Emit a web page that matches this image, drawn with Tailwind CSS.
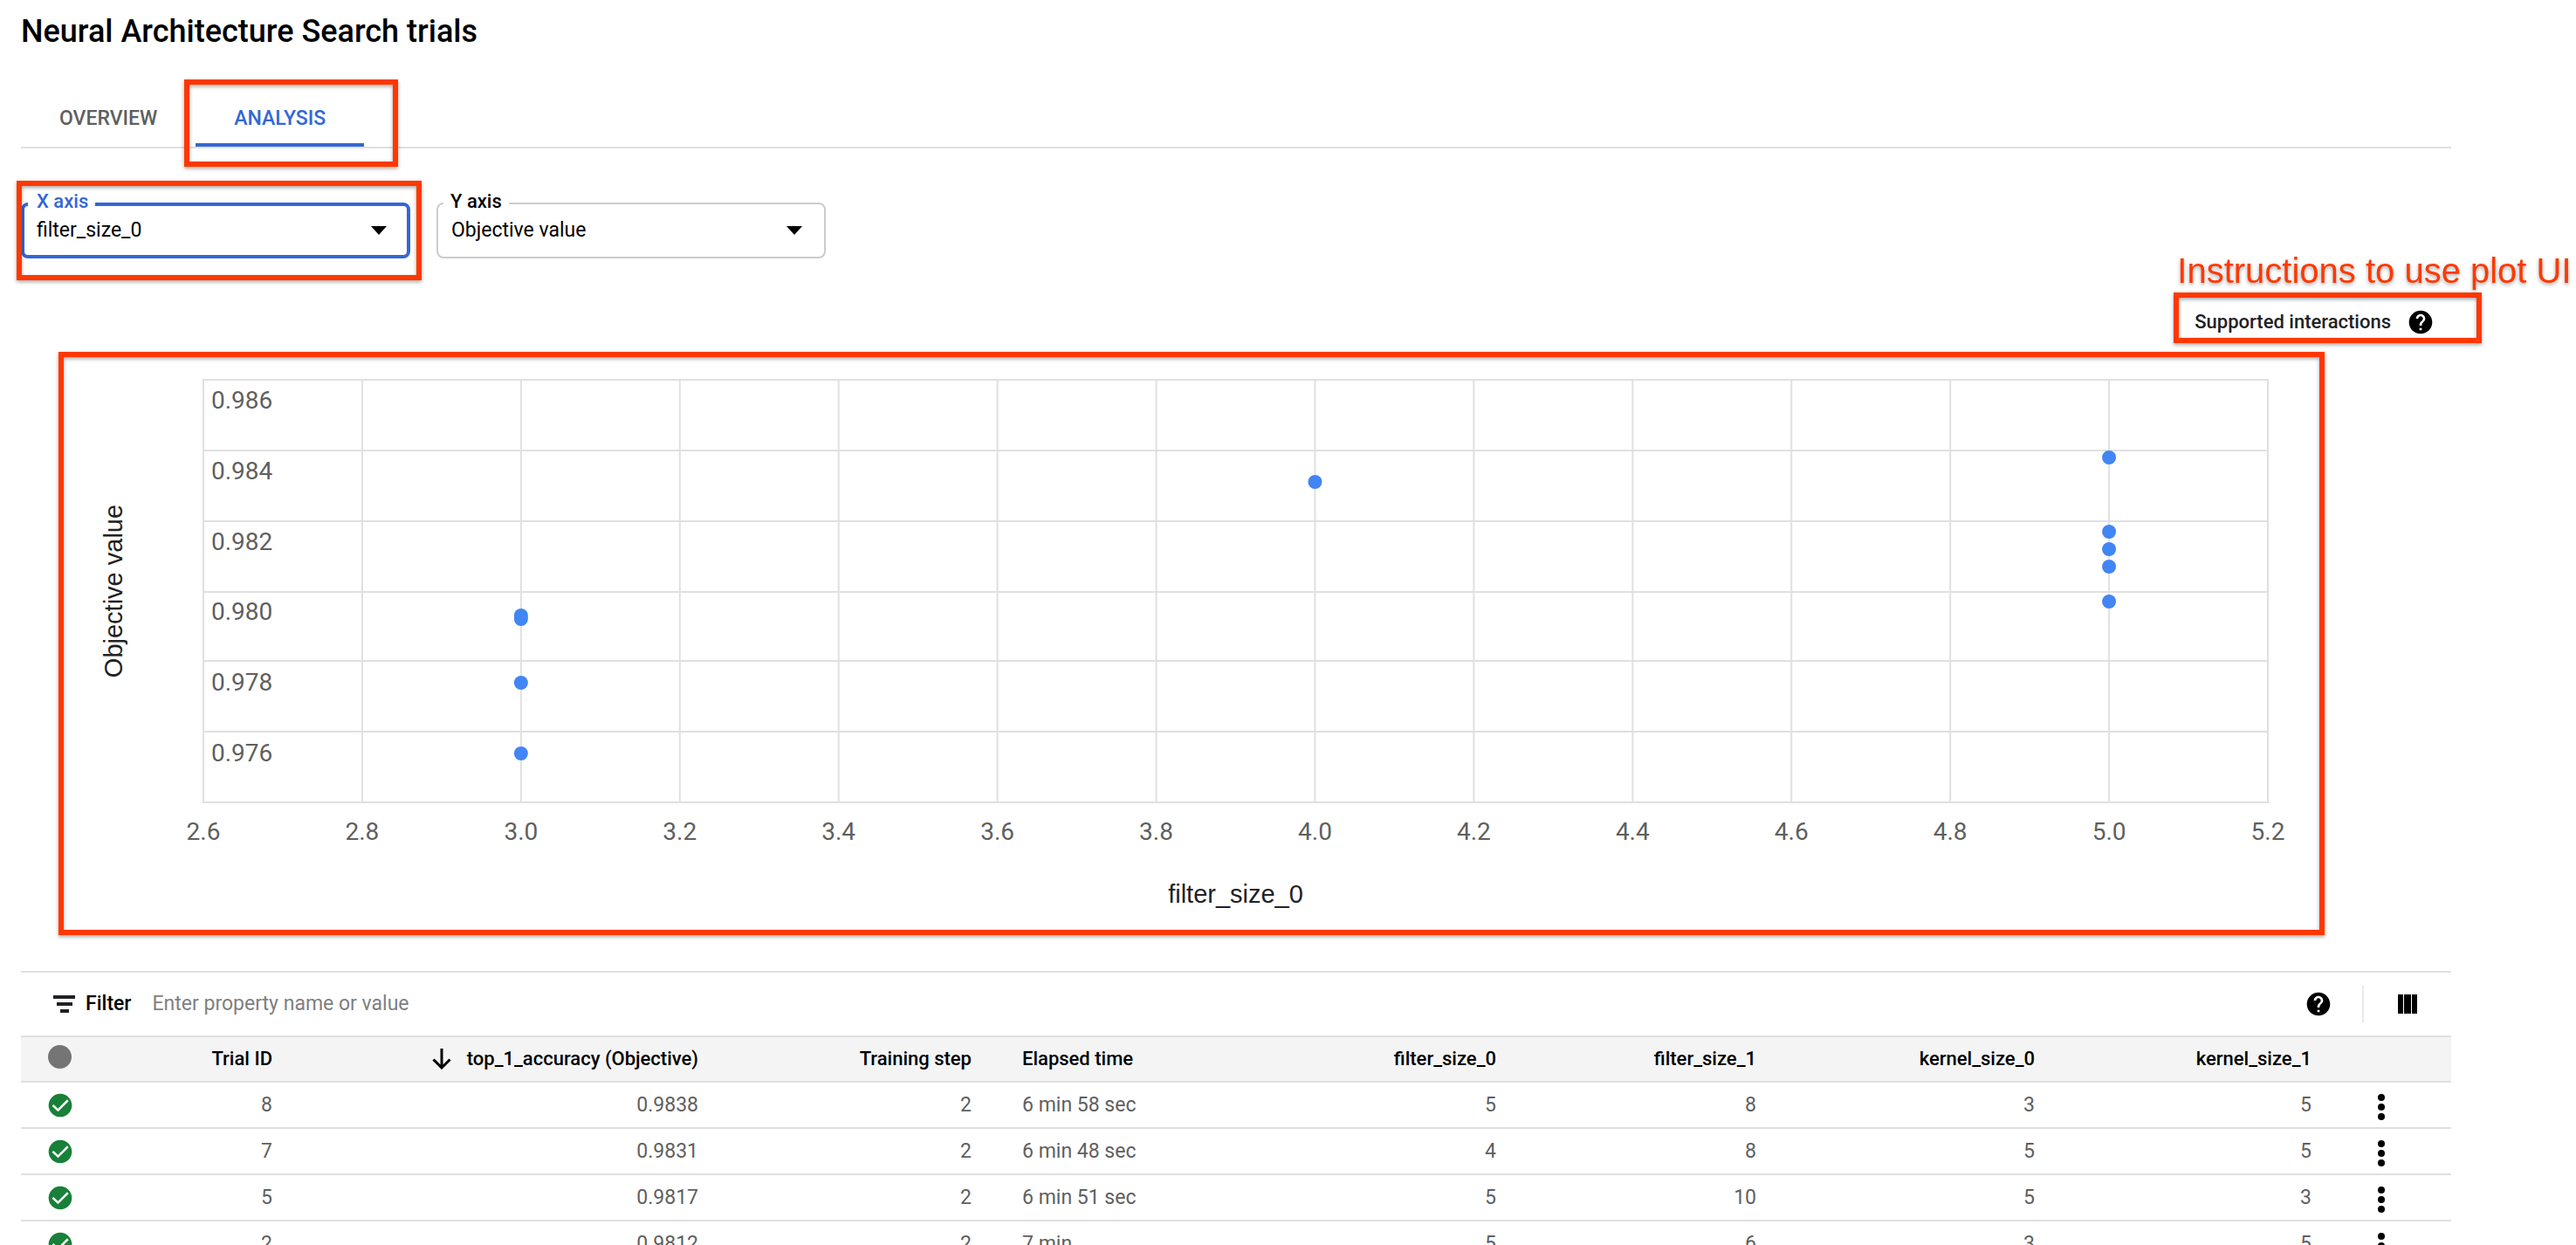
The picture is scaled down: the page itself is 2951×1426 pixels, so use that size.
<!DOCTYPE html>
<html lang="en">
<head>
<meta charset="utf-8">
<meta name="viewport" content="width=device-width, initial-scale=1">
<title>Neural Architecture Search trials</title>
<script src="https://cdn.jsdelivr.net/npm/@tailwindcss/browser@4"></script>
</head>
<body class="h-screen overflow-hidden bg-white font-[Roboto,sans-serif] text-[23px] leading-8 text-black">
<svg class="hidden">
  <symbol id="help" viewBox="0 0 24 24"><path d="M12 2C6.48 2 2 6.48 2 12s4.480 10 10 10 10-4.480 10-10S17.520 2 12 2zm1 17h-2v-2h2v2zm2.070-7.750l-.9.920C13.450 12.900 13 13.500 13 15h-2v-.5c0-1.100.450-2.100 1.170-2.830l1.240-1.260c.370-.360.590-.860.590-1.410 0-1.100-.9-2-2-2s-2 .9-2 2H8c0-2.210 1.790-4 4-4s4 1.790 4 4c0 .880-.360 1.680-.930 2.250z"/></symbol>
  <symbol id="done" viewBox="0 0 24 24"><path fill="#188038" d="M12 2C6.480 2 2 6.480 2 12s4.480 10 10 10 10-4.480 10-10S17.520 2 12 2z"/><path fill="none" stroke="#fff" stroke-width="1.900" d="M5.600 11.900l4.500 4.300 8.500-8.500"/></symbol>
  <symbol id="more" viewBox="0 0 8 30"><circle cx="4" cy="4" r="4"/><circle cx="4" cy="15" r="4"/><circle cx="4" cy="26" r="4"/></symbol>
</svg>

<main class="mr-[143px] ml-6">
  <h1 class="h-24 pt-3 text-4xl leading-12 font-medium">Neural Architecture Search trials</h1>

  <div role="tablist" class="flex border-b-2 border-[#e0e0e0]">
    <button role="tab" aria-selected="false" class="h-[72px] px-11 pt-2 font-medium text-[#5f5f5f]">OVERVIEW</button>
    <button role="tab" aria-selected="true" class="relative h-[72px] border-b-4 border-[#3367d6] px-11 pt-3 font-medium text-[#3367d6]">ANALYSIS
      <span class="pointer-events-none absolute -top-[5px] -right-[39px] -bottom-[27px] -left-[13px] border-6 border-[#ff3800] drop-shadow-[0_2px_2px_rgba(0,0,0,0.35)]"></span>
    </button>
  </div>

  <div class="mt-[62px] flex gap-[30px]">
    <div class="relative h-16 w-[446px]">
      <select id="x-axis" class="size-full appearance-none rounded-lg border-4 border-[#3367d6] bg-white pl-[14px] outline-none"><option>filter_size_0</option></select>
      <label for="x-axis" class="absolute -top-[13px] left-2 bg-white pr-2 pl-[10px] text-[22px] leading-6 font-medium text-[#3367d6]">X axis</label>
      <svg class="pointer-events-none absolute top-[27px] right-[27px] h-[10px] w-[18px]" viewBox="0 0 18 10"><path d="M0 0h18l-9 10z"/></svg>
      <span class="pointer-events-none absolute -inset-y-[25px] -right-[13px] -left-[5px] border-6 border-[#ff3800] drop-shadow-[0_2px_2px_rgba(0,0,0,0.35)]"></span>
    </div>
    <div class="relative h-16 w-[446px]">
      <select id="y-axis" class="size-full appearance-none rounded-lg border-2 border-[#cccccc] bg-white pl-[15px] outline-none"><option>Objective value</option></select>
      <label for="y-axis" class="absolute -top-[13px] left-2 bg-white px-2 text-[22px] leading-6 font-medium">Y axis</label>
      <svg class="pointer-events-none absolute top-[27px] right-[27px] h-[10px] w-[18px]" viewBox="0 0 18 10"><path d="M0 0h18l-9 10z"/></svg>
    </div>
  </div>

  <div class="mt-[39px] -mr-[35px] flex justify-end">
    <div class="relative flex h-[58px] items-center gap-[18px] pt-[10px] pr-[54px] pl-6">
      <span class="text-[22px] font-medium text-[#202124]">Supported interactions</span>
      <button aria-label="Supported interactions help"><svg class="size-8"><use href="#help"/></svg></button>
      <span class="pointer-events-none absolute inset-0 border-6 border-[#ff3800] drop-shadow-[0_2px_2px_rgba(0,0,0,0.35)]"></span>
      <p class="absolute bottom-full left-1 mb-px font-['Liberation_Sans',sans-serif] text-[40px] leading-12 whitespace-nowrap text-[#ff3800] drop-shadow-[0_2px_2px_rgba(0,0,0,0.35)]">Instructions to use plot UI</p>
    </div>
  </div>

  <figure class="relative mt-[10px] mr-[145px] ml-[43px] pt-8 pr-[65px] pb-[152px] pl-[166px]">
    <svg class="h-[484px] w-full overflow-visible" role="img" aria-label="Objective value by filter_size_0">
      <g stroke="#e0e0e0" stroke-width="2">
        <line x1="0" x2="100%" y1="0" y2="0"/><line x1="0" x2="100%" y1="81" y2="81"/><line x1="0" x2="100%" y1="162" y2="162"/><line x1="0" x2="100%" y1="243" y2="243"/><line x1="0" x2="100%" y1="322" y2="322"/><line x1="0" x2="100%" y1="403" y2="403"/><line x1="0" x2="100%" y1="484" y2="484"/>
        <line x1="0" x2="0" y1="-1" y2="485"/><line x1="7.692%" x2="7.692%" y1="0" y2="484"/><line x1="15.385%" x2="15.385%" y1="0" y2="484"/><line x1="23.077%" x2="23.077%" y1="0" y2="484"/><line x1="30.769%" x2="30.769%" y1="0" y2="484"/><line x1="38.462%" x2="38.462%" y1="0" y2="484"/><line x1="46.154%" x2="46.154%" y1="0" y2="484"/><line x1="53.846%" x2="53.846%" y1="0" y2="484"/><line x1="61.538%" x2="61.538%" y1="0" y2="484"/><line x1="69.231%" x2="69.231%" y1="0" y2="484"/><line x1="76.923%" x2="76.923%" y1="0" y2="484"/><line x1="84.615%" x2="84.615%" y1="0" y2="484"/><line x1="92.308%" x2="92.308%" y1="0" y2="484"/><line x1="100%" x2="100%" y1="-1" y2="485"/>
      </g>
      <g class="text-[28px]" fill="#5f5f5f">
        <text x="9" y="33">0.986</text><text x="9" y="114">0.984</text><text x="9" y="195">0.982</text><text x="9" y="275">0.980</text><text x="9" y="356">0.978</text><text x="9" y="437">0.976</text>
      </g>
      <g class="text-[28px]" fill="#5f5f5f" text-anchor="middle">
        <text x="0" y="527">2.6</text><text x="7.692%" y="527">2.8</text><text x="15.385%" y="527">3.0</text><text x="23.077%" y="527">3.2</text><text x="30.769%" y="527">3.4</text><text x="38.462%" y="527">3.6</text><text x="46.154%" y="527">3.8</text><text x="53.846%" y="527">4.0</text><text x="61.538%" y="527">4.2</text><text x="69.231%" y="527">4.4</text><text x="76.923%" y="527">4.6</text><text x="84.615%" y="527">4.8</text><text x="92.308%" y="527">5.0</text><text x="100%" y="527">5.2</text>
      </g>
      <g class="font-['Liberation_Sans',sans-serif] text-[29px]" fill="#222" text-anchor="middle">
        <text x="50%" y="599">filter_size_0</text>
        <text transform="translate(-93 242) rotate(-90)">Objective value</text>
      </g>
      <g fill="#4285f4">
        <circle cx="15.385%" cy="270" r="8"/><circle cx="15.385%" cy="274" r="8"/><circle cx="15.385%" cy="347" r="8"/><circle cx="15.385%" cy="428" r="8"/>
        <circle cx="53.846%" cy="117" r="8"/>
        <circle cx="92.308%" cy="89" r="8"/><circle cx="92.308%" cy="174" r="8"/><circle cx="92.308%" cy="194" r="8"/><circle cx="92.308%" cy="214" r="8"/><circle cx="92.308%" cy="254" r="8"/>
      </g>
    </svg>
    <span class="pointer-events-none absolute inset-0 border-6 border-[#ff3800] drop-shadow-[0_2px_2px_rgba(0,0,0,0.35)]"></span>
  </figure>

  <section class="mt-[41px] border-t-2 border-[#e0e0e0]">
    <div class="flex h-[72px] items-center pr-[39px] pl-[37px]">
      <svg class="mr-3 h-5 w-[25px]" viewBox="0 0 25 20" fill="#202124"><path d="M0 0h25v4H0zM4 8h18v4H4zM8 16h10v4H8z"/></svg>
      <label for="filter" class="mr-6 font-medium">Filter</label>
      <input id="filter" type="text" placeholder="Enter property name or value" class="min-w-0 flex-1 bg-transparent outline-none placeholder:text-[#7f7f7f]">
      <button aria-label="Filter help"><svg class="size-8"><use href="#help"/></svg></button>
      <span class="mx-[34px] h-[42px] border-l-2 border-[#e8e8e8]"></span>
      <button aria-label="Column display options" class="ml-[5px]"><svg class="size-[22px]" viewBox="0 0 22 22"><path d="M0 0h6v22H0zM7 0h8v22H7zM16 0h6v22h-6z"/></svg></button>
    </div>
    <table class="w-full table-fixed border-separate border-spacing-0 text-right text-[#5f5f5f]">
      <colgroup><col class="w-[76px]"><col class="w-[241px]"><col class="w-[488px]"><col class="w-[313px]"><col class="w-[303px]"><col class="w-[298px]"><col class="w-[298px]"><col class="w-[319px]"><col class="w-[317px]"><col></colgroup>
      <thead class="bg-[#f4f4f4] text-[22px] text-black [&_th]:h-[54px] [&_th]:border-y-2 [&_th]:border-[#e0e0e0] [&_th]:p-0 [&_th]:pr-[29px] [&_th]:font-medium">
        <tr>
          <th scope="col" aria-label="Status"><svg class="mb-[6px] ml-[31px] size-[27px]" viewBox="0 0 24 24"><circle cx="12" cy="12" r="12" fill="#757575"/></svg></th>
          <th scope="col">Trial ID</th>
          <th scope="col" aria-sort="descending"><button class="ml-auto flex items-center gap-[18px]"><svg class="h-6 w-[22px]" viewBox="0 0 22 24" fill="none" stroke="#000" stroke-width="3"><path d="M11 0v22M1.500 12.500l9.500 9.500 9.500-9.500"/></svg>top_1_accuracy (Objective)</button></th>
          <th scope="col">Training step</th>
          <th scope="col" class="pl-[29px]! text-left">Elapsed time</th>
          <th scope="col">filter_size_0</th>
          <th scope="col">filter_size_1</th>
          <th scope="col">kernel_size_0</th>
          <th scope="col">kernel_size_1</th>
          <th aria-label="Actions"></th>
        </tr>
      </thead>
      <tbody class="[&_td]:h-[53px] [&_td]:border-b-2 [&_td]:border-[#e0e0e0] [&_td]:p-0 [&_td]:pr-[29px]">
        <tr><td><svg class="ml-[29px] size-8" role="img" aria-label="Succeeded"><use href="#done"/></svg></td><td>8</td><td>0.9838</td><td>2</td><td class="pl-[29px]! text-left">6 min 58 sec</td><td>5</td><td>8</td><td>3</td><td>5</td><td class="text-left"><button aria-label="Actions for trial 8" class="ml-[47px] block pt-1"><svg class="h-[30px] w-2"><use href="#more"/></svg></button></td></tr>
        <tr><td><svg class="ml-[29px] size-8" role="img" aria-label="Succeeded"><use href="#done"/></svg></td><td>7</td><td>0.9831</td><td>2</td><td class="pl-[29px]! text-left">6 min 48 sec</td><td>4</td><td>8</td><td>5</td><td>5</td><td class="text-left"><button aria-label="Actions for trial 7" class="ml-[47px] block pt-1"><svg class="h-[30px] w-2"><use href="#more"/></svg></button></td></tr>
        <tr><td><svg class="ml-[29px] size-8" role="img" aria-label="Succeeded"><use href="#done"/></svg></td><td>5</td><td>0.9817</td><td>2</td><td class="pl-[29px]! text-left">6 min 51 sec</td><td>5</td><td>10</td><td>5</td><td>3</td><td class="text-left"><button aria-label="Actions for trial 5" class="ml-[47px] block pt-1"><svg class="h-[30px] w-2"><use href="#more"/></svg></button></td></tr>
        <tr><td><svg class="ml-[29px] size-8" role="img" aria-label="Succeeded"><use href="#done"/></svg></td><td>2</td><td>0.9812</td><td>2</td><td class="pl-[29px]! text-left">7 min</td><td>5</td><td>6</td><td>3</td><td>5</td><td class="text-left"><button aria-label="Actions for trial 2" class="ml-[47px] block pt-1"><svg class="h-[30px] w-2"><use href="#more"/></svg></button></td></tr>
      </tbody>
    </table>
  </section>
</main>
</body>
</html>
